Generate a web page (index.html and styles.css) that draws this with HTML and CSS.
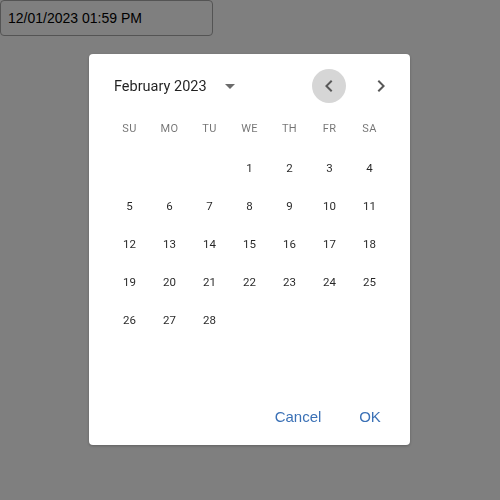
FILE: index.html
```html
<!DOCTYPE html>
<html>
<head>
<meta charset="utf-8">
<link rel="stylesheet" href="styles.css">
</head>
<body>
<input class="date-input" type="text" value="12/01/2023 01:59 PM">
<div class="overlay">
  <div class="dialog">
    <div class="header">
      <div class="label">February 2023</div>
      <button class="icon-btn switch">
        <svg viewBox="0 0 24 24" width="24" height="24"><path d="M7 10l5 5 5-5z"/></svg>
      </button>
      <div class="nav">
        <button class="icon-btn nav-btn active">
          <svg viewBox="0 0 24 24" width="24" height="24"><path d="M15.41 7.41 14 6l-6 6 6 6 1.41-1.41L10.83 12z"/></svg>
        </button>
        <button class="icon-btn nav-btn">
          <svg viewBox="0 0 24 24" width="24" height="24"><path d="M10 6 8.59 7.41 13.17 12l-4.58 4.59L10 18l6-6z"/></svg>
        </button>
      </div>
    </div>
    <div class="weekdays">
      <span>SU</span><span>MO</span><span>TU</span><span>WE</span><span>TH</span><span>FR</span><span>SA</span>
    </div>
    <div class="days">
      <span></span><span></span><span></span>
      <span>1</span><span>2</span><span>3</span><span>4</span>
      <span>5</span><span>6</span><span>7</span><span>8</span><span>9</span><span>10</span><span>11</span>
      <span>12</span><span>13</span><span>14</span><span>15</span><span>16</span><span>17</span><span>18</span>
      <span>19</span><span>20</span><span>21</span><span>22</span><span>23</span><span>24</span><span>25</span>
      <span>26</span><span>27</span><span>28</span>
    </div>
    <div class="actions">
      <button class="text-btn">Cancel</button>
      <button class="text-btn">OK</button>
    </div>
  </div>
</div>
</body>
</html>
```
FILE: styles.css
```css
html, body {
  margin: 0;
  padding: 0;
  background: #fff;
}
.date-input {
  display: block;
  box-sizing: border-box;
  width: 213px;
  height: 36px;
  margin: 0;
  padding: 0 0 0 7px;
  border: 1px solid #a8a8a8;
  border-radius: 4px;
  font-family: "Liberation Sans", Arial, sans-serif;
  font-size: 14px;
  color: #000;
  background: #fff;
}
.overlay {
  position: fixed;
  inset: 0;
  background: rgba(0, 0, 0, 0.5);
  display: flex;
  align-items: center;
  justify-content: center;
}
.dialog {
  box-sizing: border-box;
  width: 321px;
  height: 391px;
  margin: 0 1px 1px 0;
  background: #fff;
  border-radius: 4px;
  box-shadow: 0 1px 3px rgba(0,0,0,0.25);
  display: flex;
  flex-direction: column;
  font-family: Roboto, "Liberation Sans", sans-serif;
}
.header {
  display: flex;
  align-items: center;
  height: 30px;
  margin: 17px 0 7px;
  padding: 0 12px 0 25px;
}
.label {
  font-size: 14.5px;
  font-weight: 400;
  color: rgba(0,0,0,0.87);
  margin-right: 6px;
}
.icon-btn {
  border: 0;
  background: transparent;
  padding: 5px;
  margin: 0;
  border-radius: 50%;
  display: flex;
  align-items: center;
  justify-content: center;
  cursor: pointer;
}
.icon-btn svg {
  fill: #666;
  display: block;
}
.switch svg {
  fill: #6b6b6b;
}
.nav {
  margin-left: auto;
  display: flex;
  gap: 18px;
}
.nav-btn {
  width: 34px;
  height: 34px;
}
.nav-btn svg {
  fill: #585858;
}
.nav-btn.active {
  background: #d6d6d6;
}
.weekdays, .days {
  display: grid;
  grid-template-columns: repeat(7, 40px);
  justify-content: center;
}
.weekdays span {
  height: 40px;
  display: flex;
  align-items: center;
  justify-content: center;
  font-size: 11px;
  letter-spacing: 0.3px;
  color: rgba(0,0,0,0.55);
}
.days {
  row-gap: 2px;
  margin-top: 2px;
}
.days span {
  height: 36px;
  display: flex;
  align-items: center;
  justify-content: center;
  font-size: 11.5px;
  color: rgba(0,0,0,0.85);
}
.actions {
  margin-top: auto;
  display: flex;
  justify-content: flex-end;
  gap: 8px;
  padding: 8px 8px 11px;
}
.text-btn {
  min-width: 64px;
  height: 36px;
  padding: 6px 8px;
  border: 0;
  background: transparent;
  font-family: "Liberation Sans", Arial, sans-serif;
  font-size: 15px;
  color: #3b71b6;
  cursor: pointer;
}
```
